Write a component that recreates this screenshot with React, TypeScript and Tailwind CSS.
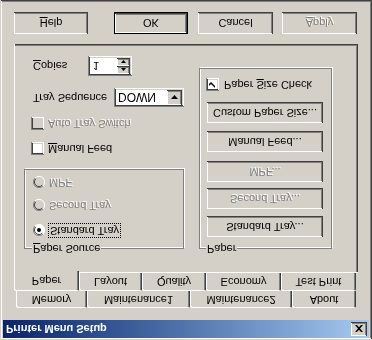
import React from 'react';

const raised =
  'bg-[#d4d0c8] shadow-[inset_-1px_-1px_#404040,inset_1px_1px_#ffffff,inset_-2px_-2px_#808080]';
const sunken =
  'shadow-[inset_1px_1px_#808080,inset_-1px_-1px_#ffffff,inset_2px_2px_#404040,inset_-2px_-2px_#d4d0c8]';
const grayText = 'text-[#808080] [text-shadow:1px_1px_#ffffff]';

function Btn({ label, disabled, className = '' }: { label: React.ReactNode; disabled?: boolean; className?: string }) {
  return (
    <div className={`${raised} h-[21px] flex items-center justify-center ${disabled ? grayText : ''} ${className}`}>
      {label}
    </div>
  );
}

function Check({ checked, disabled }: { checked?: boolean; disabled?: boolean }) {
  return (
    <div className={`w-[13px] h-[13px] shrink-0 ${disabled ? 'bg-[#d4d0c8]' : 'bg-white'} ${sunken} flex items-center justify-center`}>
      {checked && (
        <svg width="7" height="7" viewBox="0 0 7 7">
          <path d="M0 2 L2 4 L6 0 L6 2 L2 6 L0 4 Z" fill="#000" />
        </svg>
      )}
    </div>
  );
}

function Radio({ checked, disabled }: { checked?: boolean; disabled?: boolean }) {
  return (
    <svg width="12" height="12" viewBox="0 0 12 12" className="shrink-0">
      <circle cx="6" cy="6" r="5.5" fill={disabled ? '#d4d0c8' : '#ffffff'} />
      <path d="M10 2 A5.5 5.5 0 0 0 2 10" fill="none" stroke="#808080" strokeWidth="1" />
      <path d="M9.2 2.8 A4.5 4.5 0 0 0 2.8 9.2" fill="none" stroke="#404040" strokeWidth="1" />
      <path d="M2 10 A5.5 5.5 0 0 0 10 2" fill="none" stroke="#ffffff" strokeWidth="1" />
      {checked && <circle cx="6" cy="6" r="2" fill="#000" />}
    </svg>
  );
}

function Tab({ label, w, active }: { label: string; w: string; active?: boolean }) {
  return (
    <div
      className={`${w} flex items-center justify-center bg-[#d4d0c8] rounded-t-[2px] shadow-[inset_1px_1px_#ffffff,inset_-1px_0_#404040,inset_-2px_0_#808080] ${
        active ? 'h-[20px] -mb-[2px] relative z-10' : 'h-full'
      }`}
    >
      {label}
    </div>
  );
}

export default function App() {
  return (
    <div
      className="w-[372px] h-[340px] bg-[#d4d0c8] text-black text-[11px] leading-none [transform:scaleY(-1)] shadow-[inset_1px_1px_#d4d0c8,inset_-1px_-1px_#404040,inset_2px_2px_#ffffff,inset_-2px_-2px_#808080] overflow-hidden flex flex-col"
      style={{ fontFamily: '"Liberation Sans", Arial, sans-serif' }}
    >
      {/* title bar */}
      <div className="mx-[3px] mt-[2px] h-[18px] flex items-center justify-between bg-gradient-to-r from-[#0a246a] to-[#a6caf0] pl-[3px] pr-[2px]">
        <span className="text-white font-bold text-[11px]">Printer Menu Setup</span>
        <div className={`${raised} w-[16px] h-[14px] flex items-center justify-center`}>
          <svg width="8" height="7" viewBox="0 0 8 7">
            <path d="M0 0 L2 0 L4 2.2 L6 0 L8 0 L5 3.5 L8 7 L6 7 L4 4.8 L2 7 L0 7 L3 3.5 Z" fill="#000" />
          </svg>
        </div>
      </div>

      {/* tabs */}
      <div className="flex ml-[16px] mt-[12px] h-[17px]">
        <Tab label="Memory" w="w-[71px]" />
        <Tab label="Maintenance1" w="w-[103px]" />
        <Tab label="Maintenance2" w="w-[102px]" />
        <Tab label="About" w="w-[64px]" />
      </div>
      <div className="flex items-end ml-[14px] h-[18px]">
        <Tab label="Paper" w="w-[65px]" active />
        <Tab label="Layout" w="w-[63px]" />
        <Tab label="Quality" w="w-[64px]" />
        <Tab label="Economy" w="w-[75px]" />
        <Tab label="Test Print" w="w-[75px]" />
      </div>

      {/* panel */}
      <div className="ml-[14px] w-[344px] h-[229px] shadow-[inset_1px_1px_#ffffff,inset_-1px_-1px_#404040,inset_-2px_-2px_#808080] flex pt-[24px] pl-[10px]">
        {/* left column */}
        <div className="w-[160px] flex flex-col">
          <div className="relative h-[80px] border border-[#808080] shadow-[inset_1px_1px_#ffffff,1px_1px_#ffffff] flex flex-col pl-[8px]">
            <span className="absolute -top-[6px] left-[7px] px-[1px] bg-[#d4d0c8]">
              <u>P</u>aper Source
            </span>
            <div className="flex items-center gap-[3px] mt-[11px] h-[13px]">
              <Radio checked />
              <span className="border border-dotted border-black px-[1px] py-[1px]">Standard Tray</span>
            </div>
            <div className={`flex items-center gap-[4px] mt-[12px] h-[13px] ${grayText}`}>
              <Radio disabled />
              <span>Second Tray</span>
            </div>
            <div className={`flex items-center gap-[4px] mt-[10px] h-[13px] ${grayText}`}>
              <Radio disabled />
              <span>MPF</span>
            </div>
          </div>

          <div className="flex items-center gap-[4px] ml-[7px] mt-[14px]">
            <Check />
            <span>
              <u>M</u>anual Feed
            </span>
          </div>
          <div className={`flex items-center gap-[4px] ml-[7px] mt-[12px] ${grayText}`}>
            <Check disabled />
            <span>Auto Tray Switch</span>
          </div>

          <div className="flex items-center ml-[9px] mt-[10px] h-[19px]">
            <span className="w-[81px]">Tray Sequence</span>
            <div className={`w-[70px] h-[19px] bg-white ${sunken} flex items-center justify-between pl-[4px] pr-[2px]`}>
              <span className="text-[12px]">DOWN</span>
              <div className={`${raised} w-[15px] h-[15px] flex items-center justify-center`}>
                <svg width="7" height="4" viewBox="0 0 7 4">
                  <path d="M0 0 L7 0 L3.5 4 Z" fill="#000" />
                </svg>
              </div>
            </div>
          </div>

          <div className="flex items-center ml-[9px] mt-[12px] h-[20px]">
            <span className="w-[55px]">
              <u>C</u>opies
            </span>
            <div className={`w-[44px] h-[20px] bg-white ${sunken} flex items-center justify-between pl-[5px] pr-[2px]`}>
              <span>1</span>
              <div className="flex flex-col w-[13px]">
                <div className={`${raised} h-[8px] flex items-center justify-center`}>
                  <svg width="5" height="3" viewBox="0 0 5 3">
                    <path d="M0 3 L5 3 L2.5 0 Z" fill="#000" />
                  </svg>
                </div>
                <div className={`${raised} h-[8px] flex items-center justify-center`}>
                  <svg width="5" height="3" viewBox="0 0 5 3">
                    <path d="M0 0 L5 0 L2.5 3 Z" fill="#000" />
                  </svg>
                </div>
              </div>
            </div>
          </div>
        </div>

        {/* right group */}
        <div className="relative ml-[15px] w-[133px] h-[181px] border border-[#808080] shadow-[inset_1px_1px_#ffffff,1px_1px_#ffffff] flex flex-col pl-[7px]">
          <span className="absolute -top-[6px] left-[6px] px-[1px] bg-[#d4d0c8]">Paper</span>
          <Btn label="Standard Tray..." className="w-[116px] mt-[11px]" />
          <Btn label="Second Tray..." disabled className="w-[116px] mt-[7px]" />
          <Btn label="MPF..." disabled className="w-[116px] mt-[6px]" />
          <Btn label="Manual Feed..." className="w-[116px] mt-[9px]" />
          <Btn label="Custom Paper Size..." className="w-[116px] mt-[8px]" />
          <div className="flex items-center gap-[5px] mt-[11px] -ml-[1px]">
            <Check checked />
            <span>
              Paper <u>S</u>ize Check
            </span>
          </div>
        </div>
      </div>

      {/* bottom buttons */}
      <div className="flex mt-[10px] ml-[14px] h-[22px]">
        <Btn label={<span><u>H</u>elp</span>} className="w-[74px] !h-[22px]" />
        <div className="ml-[26px] w-[74px] h-[22px] border border-black">
          <Btn label="OK" className="w-full !h-[20px]" />
        </div>
        <Btn label="Cancel" className="ml-[10px] w-[75px] !h-[22px]" />
        <Btn label={<span><u>A</u>pply</span>} disabled className="ml-[9px] w-[75px] !h-[22px]" />
      </div>
    </div>
  );
}
